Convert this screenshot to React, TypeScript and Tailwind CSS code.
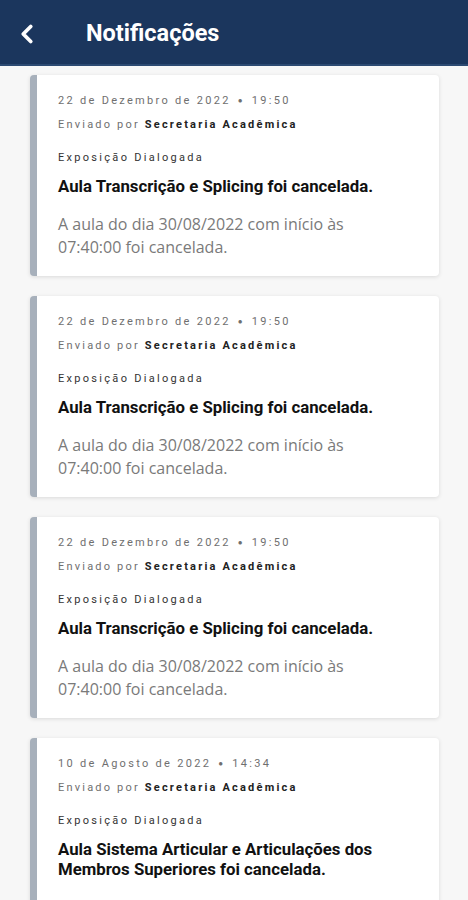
import { ChevronLeft } from "lucide-react";

type Notice = {
  date: string;
  time: string;
  title: string;
  body?: string;
};

const notices: Notice[] = [
  {
    date: "22 de Dezembro de 2022",
    time: "19:50",
    title: "Aula Transcrição e Splicing foi cancelada.",
    body: "A aula do dia 30/08/2022 com início às 07:40:00 foi cancelada.",
  },
  {
    date: "22 de Dezembro de 2022",
    time: "19:50",
    title: "Aula Transcrição e Splicing foi cancelada.",
    body: "A aula do dia 30/08/2022 com início às 07:40:00 foi cancelada.",
  },
  {
    date: "22 de Dezembro de 2022",
    time: "19:50",
    title: "Aula Transcrição e Splicing foi cancelada.",
    body: "A aula do dia 30/08/2022 com início às 07:40:00 foi cancelada.",
  },
  {
    date: "10 de Agosto de 2022",
    time: "14:34",
    title: "Aula Sistema Articular e Articulações dos Membros Superiores foi cancelada.",
    body: "A aula do dia 10/08/2022 com início às 07:40:00 foi cancelada.",
  },
];

function Card({ n }: { n: Notice }) {
  return (
    <div className="ml-[30px] mr-[29px] rounded-[4px] border-l-[7px] border-[#a7b0bb] bg-white pl-[21px] pr-4 pt-[14px] pb-[17px] shadow-[0_1px_4px_rgba(0,0,0,0.12)]">
      <div className="font-['Roboto'] text-[11px] leading-[24px] tracking-[2.3px] text-[#6f6f6f]">
        {n.date} <span className="mx-[2px] text-[8px] align-[1px]">●</span> {n.time}
      </div>
      <div className="font-['Roboto'] text-[11px] leading-[24px] tracking-[2.2px] text-[#6f6f6f]">
        Enviado por <span className="font-bold text-[#222]">Secretaria Acadêmica</span>
      </div>
      <div className="mt-[9px] font-['Roboto'] text-[11px] leading-[24px] tracking-[2.3px] text-[#333]">
        Exposição Dialogada
      </div>
      <div className="mt-[6px] pr-6 font-['Roboto'] text-[16.8px] font-bold leading-[20px] text-[#111]">
        {n.title}
      </div>
      {n.body && (
        <p className="mt-[17px] pr-10 font-['Open_Sans'] text-[16px] leading-[23px] text-[#7a7a7a]">
          {n.body}
        </p>
      )}
    </div>
  );
}

export default function App() {
  return (
    <div className="h-[900px] overflow-hidden bg-[#f7f7f7]">
      <div className="flex h-[66px] items-center border-b-2 border-[#2c4a72] bg-[#1b365d] pt-[4px]">
        <ChevronLeft className="ml-[12px] text-white" size={30} strokeWidth={3} />
        <h1 className="ml-[44px] font-['Roboto'] text-[23.5px] font-bold text-white">Notificações</h1>
      </div>
      <div className="flex flex-col gap-[20px] pt-[9px]">
        {notices.map((n, i) => (
          <Card key={i} n={n} />
        ))}
      </div>
    </div>
  );
}
